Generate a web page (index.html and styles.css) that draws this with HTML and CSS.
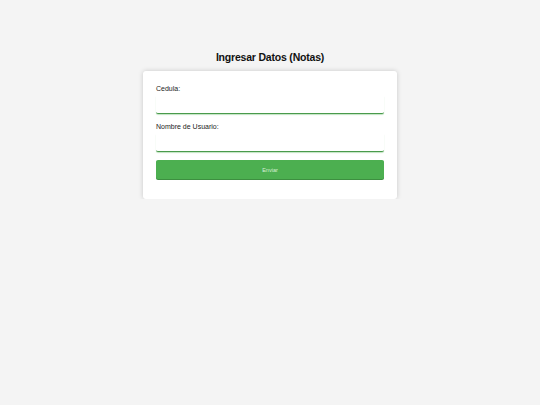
FILE: index.html
```html
<!DOCTYPE html>
<html lang="es">
<head>
<meta charset="utf-8">
<title>Ingresar Datos (Notas)</title>
<link rel="stylesheet" href="styles.css">
</head>
<body>
<main class="page">
  <h1 class="title">Ingresar Datos (Notas)</h1>
  <form class="card">
    <label class="label" for="cedula">Cedula:</label>
    <input class="input" id="cedula" type="text">
    <label class="label" for="usuario">Nombre de Usuario:</label>
    <input class="input" id="usuario" type="text">
    <button class="btn" type="button">Enviar</button>
  </form>
</main>
</body>
</html>
```
FILE: styles.css
```css
html, body {
  margin: 0;
  padding: 0;
  background: #f4f4f4;
  font-family: "Liberation Sans", Arial, sans-serif;
}
.page {
  display: flex;
  flex-direction: column;
  align-items: center;
  padding-top: 51px;
}
.title {
  margin: 0 0 7px 0;
  font-size: 10.5px;
  letter-spacing: -0.2px;
  line-height: 13px;
  font-weight: bold;
  color: #111;
}
.card {
  width: 228px;
  background: #fff;
  border-radius: 3px;
  box-shadow: 0 0 5px rgba(0,0,0,0.18);
  padding: 13px 13px 20px 13px;
  display: flex;
  flex-direction: column;
}
.label {
  font-size: 7px;
  line-height: 8px;
  color: #222;
  margin-top: 1px;
}
.input {
  box-sizing: border-box;
  height: 18px;
  margin: 3px 0 8px 0;
  border: none;
  border-bottom: 1.5px solid #4a9a4c;
  border-radius: 0 0 2px 2px;
  box-shadow: 0 1px 1px rgba(76,175,80,0.35);
  background: #fff;
  outline: none;
}
.btn {
  height: 19px;
  border: none;
  border-radius: 2px;
  background: #4caf50;
  box-shadow: 0 1px 0 #3d8f40;
  color: #d8efd8;
  font-family: "Liberation Sans", Arial, sans-serif;
  font-size: 5.5px;
  padding: 0;
}
```
